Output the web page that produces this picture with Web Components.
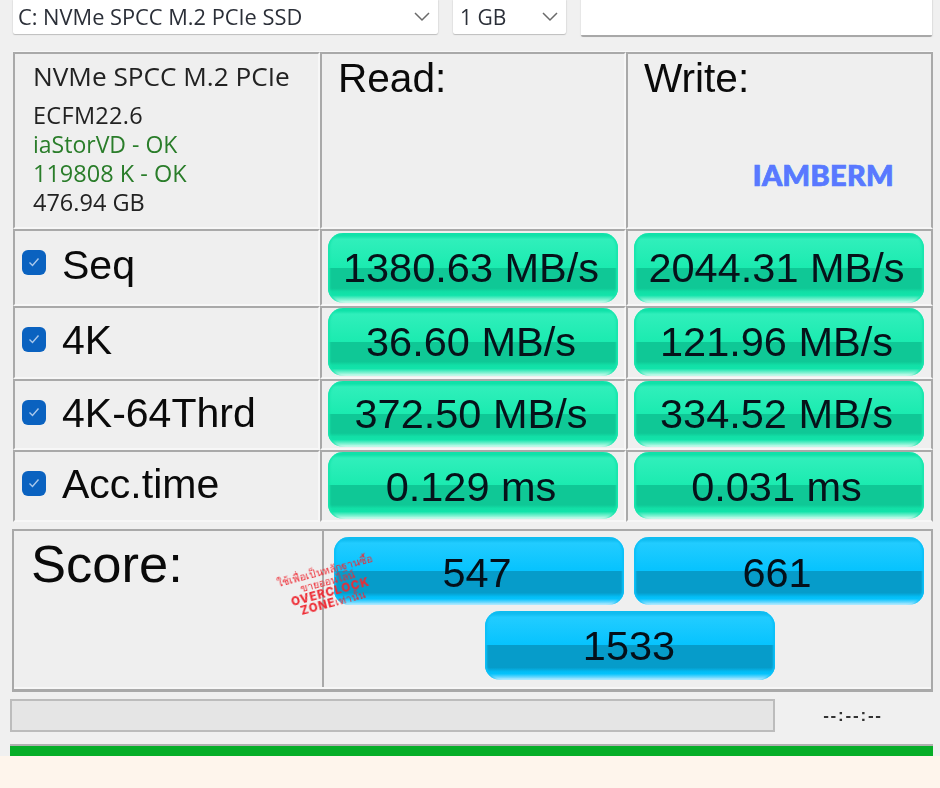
<!DOCTYPE html>
<html lang="en">
<head>
<meta charset="utf-8">
<title>AS SSD Benchmark</title>
<style>
  html, body { margin: 0; padding: 0; background: #f0f0f0; }
</style>
</head>
<body>
<bench-app>
  <bench-toolbar slot="toolbar">
    <bench-select style="width:425px">C: NVMe SPCC M.2 PCIe SSD</bench-select>
    <bench-select style="width:113px;padding-left:7px;font-size:21px">1 GB</bench-select>
    <bench-input></bench-input>
  </bench-toolbar>

  <bench-table slot="table">
    <bench-cell>
      <bench-info>
        <span>NVMe SPCC M.2 PCIe</span>
        <span slot="lines" style="letter-spacing:.3px">ECFM22.6</span>
        <span slot="lines" class="ok" style="font-size:23px">iaStorVD - OK</span>
        <span slot="lines" class="ok">119808 K - OK</span>
        <span slot="lines">476.94 GB</span>
      </bench-info>
    </bench-cell>
    <bench-cell><bench-heading>Read:</bench-heading></bench-cell>
    <bench-cell last>
      <bench-heading>Write:<bench-mark slot="mark">IAMBERM</bench-mark></bench-heading>
    </bench-cell>

    <bench-cell><bench-check style="--top:14px">Seq</bench-check></bench-cell>
    <bench-cell pill style="padding-top:2px"><bench-result>1380.63 MB/s</bench-result></bench-cell>
    <bench-cell pill last style="padding-top:2px"><bench-result style="padding-right:5px">2044.31 MB/s</bench-result></bench-cell>

    <bench-cell><bench-check>4K</bench-check></bench-cell>
    <bench-cell pill><bench-result>36.60 MB/s</bench-result></bench-cell>
    <bench-cell pill last><bench-result style="padding-right:5px">121.96 MB/s</bench-result></bench-cell>

    <bench-cell><bench-check>4K-64Thrd</bench-check></bench-cell>
    <bench-cell pill><bench-result>372.50 MB/s</bench-result></bench-cell>
    <bench-cell pill last><bench-result style="padding-right:5px">334.52 MB/s</bench-result></bench-cell>

    <bench-cell><bench-check>Acc.time</bench-check></bench-cell>
    <bench-cell pill><bench-result style="padding-top:3px">0.129 ms</bench-result></bench-cell>
    <bench-cell pill last><bench-result style="padding:3px 5px 0 0">0.031 ms</bench-result></bench-cell>
  </bench-table>

  <bench-score slot="score">
    <bench-result blue style="padding-top:3px">547</bench-result>
    <bench-result blue style="padding-top:3px">661</bench-result>
    <bench-result blue total>1533</bench-result>
  </bench-score>

  <bench-progress slot="progress">--:--:--</bench-progress>
  <bench-status slot="status"></bench-status>
</bench-app>

<script>
const UI_FONT = '"Open Sans", "Noto Sans", sans-serif';
const BIG_FONT = '"Liberation Sans", Arial, sans-serif';

class BenchApp extends HTMLElement {
  constructor() {
    super();
    this.attachShadow({ mode: "open" }).innerHTML = `
      <style>
        :host { display: block; width: 940px; height: 788px; overflow: hidden; background: #fef5ec; }
        .window { height: 756px; background: #f0f0f0; overflow: hidden; display: flex; flex-direction: column; }
      </style>
      <div class="window">
        <slot name="toolbar"></slot>
        <slot name="table"></slot>
        <slot name="score"></slot>
        <slot name="progress"></slot>
        <slot name="status"></slot>
      </div>
    `;
  }
}

class BenchToolbar extends HTMLElement {
  constructor() {
    super();
    this.attachShadow({ mode: "open" }).innerHTML = `
      <style>
        :host { display: flex; gap: 15px; align-items: flex-start; height: 52px; padding-left: 13px; box-sizing: border-box; }
      </style>
      <slot></slot>
    `;
  }
}

class BenchSelect extends HTMLElement {
  constructor() {
    super();
    this.attachShadow({ mode: "open" }).innerHTML = `
      <style>
        :host {
          display: flex; align-items: center; justify-content: space-between;
          height: 34px; box-sizing: border-box; padding: 0 8px 1px 5px;
          background: #fff; border-radius: 0 0 2px 2px;
          box-shadow: 0 1px 1px #bdbdbd, 1px 0 1px #e2e2e2, -1px 0 1px #e6e6e6;
          font: 21.8px ${UI_FONT}; color: #2b2f38; white-space: nowrap;
          filter: blur(.4px);
        }
        svg { flex: none; }
      </style>
      <span><slot></slot></span>
      <svg width="16" height="10" viewBox="0 0 16 10"><path d="M1 1l7 7 7-7" fill="none" stroke="#6a6a6a" stroke-width="1.5"/></svg>
    `;
  }
}

class BenchInput extends HTMLElement {
  constructor() {
    super();
    this.attachShadow({ mode: "open" }).innerHTML = `
      <style>
        :host {
          display: block; width: 351px; height: 37px; background: #fff;
          border-bottom: 2px solid #a8a8a8; box-sizing: border-box; border-radius: 0 0 2px 2px;
          box-shadow: 1px 0 1px #ddd, -1px 0 1px #e6e6e6;
        }
      </style>
    `;
  }
}

class BenchTable extends HTMLElement {
  constructor() {
    super();
    this.attachShadow({ mode: "open" }).innerHTML = `
      <style>
        :host {
          display: grid; grid-template-columns: 307px 306px 307px;
          grid-template-rows: 177px 77px 73px 71px 72px;
          width: 920px; margin-left: 13px; box-shadow: 0 -1px #f7f7f7;
        }
      </style>
      <slot></slot>
    `;
  }
}

class BenchCell extends HTMLElement {
  constructor() {
    super();
    this.attachShadow({ mode: "open" }).innerHTML = `
      <style>
        :host {
          display: flex; box-sizing: border-box; min-width: 0;
          border: 2px solid #a9a9a9; border-right-color: #f7f7f7; border-bottom-color: #f7f7f7;
          background: #efefef;
        }
        :host([last]) { border-right-color: #a9a9a9; }
        :host([pill]) { padding: 0 6px 1px; }
        :host([pill][last]) { padding-right: 7px; }
      </style>
      <slot></slot>
    `;
  }
}

class BenchInfo extends HTMLElement {
  constructor() {
    super();
    this.attachShadow({ mode: "open" }).innerHTML = `
      <style>
        :host { display: block; padding: 6px 0 0 18px; font: 23.5px/29px ${UI_FONT}; color: #222; white-space: nowrap; filter: blur(.4px); }
        .name { height: 41px; line-height: 33px; font-size: 26.2px; }
        .lines { display: flex; flex-direction: column; }
        ::slotted(.ok) { color: #2a7d2a; }
      </style>
      <div class="name"><slot></slot></div>
      <div class="lines"><slot name="lines"></slot></div>
    `;
  }
}

class BenchHeading extends HTMLElement {
  constructor() {
    super();
    this.attachShadow({ mode: "open" }).innerHTML = `
      <style>
        :host { display: flex; flex-direction: column; flex: 1; padding: 0 0 0 16px; font: 40.6px/48px ${BIG_FONT}; color: #0a0a0a; filter: blur(.3px); }
        .mark { display: flex; justify-content: flex-end; padding: 58px 37px 0 0; }
      </style>
      <div><slot></slot></div>
      <div class="mark"><slot name="mark"></slot></div>
    `;
  }
}

class BenchMark extends HTMLElement {
  constructor() {
    super();
    this.attachShadow({ mode: "open" }).innerHTML = `
      <style>
        :host {
          display: block; font: 900 29px/30px Lato, sans-serif; letter-spacing: .3px;
          color: #5a78ff; -webkit-text-stroke: .7px #5a78ff; text-shadow: 1px 0 0 #8fe6f2;
        }
      </style>
      <slot></slot>
    `;
  }
}

class BenchCheck extends HTMLElement {
  constructor() {
    super();
    this.attachShadow({ mode: "open" }).innerHTML = `
      <style>
        :host {
          display: flex; align-items: flex-start; gap: 16px; flex: 1; padding-left: 7px;
          font: 41px/41px ${BIG_FONT}; color: #0a0a0a; white-space: nowrap;
        }
        .box {
          width: 24px; height: 25px; margin-top: 19px; flex: none; border-radius: 6px; background: #0a62c0;
          display: flex; align-items: center; justify-content: center;
        }
        .text { margin-top: var(--top, 12px); filter: blur(.3px); }
      </style>
      <span class="box">
        <svg width="12" height="10" viewBox="0 0 12 10"><path d="M1.5 5.5l3 3L10.5 1.5" fill="none" stroke="#a9c8ec" stroke-width="1.4"/></svg>
      </span>
      <span class="text"><slot></slot></span>
    `;
  }
}

class BenchResult extends HTMLElement {
  constructor() {
    super();
    this.attachShadow({ mode: "open" }).innerHTML = `
      <style>
        :host {
          display: flex; align-items: center; justify-content: center; flex: 1;
          box-sizing: border-box; border-radius: 15px; white-space: nowrap; padding-right: 4px;
          font: 41.5px/1 ${BIG_FONT}; color: #06121a;
          background: linear-gradient(#10e2a9 0, #10e2a9 4%, #30efbb 9%, #1bebb0 49.5%, #0fc896 50%, #0fc896 79%, #12dfa6 84%, #12e3aa 89%, #8af4d6 96%, #e2fcf4 100%);
          box-shadow: inset 3px 0 2px -1px #18e6ad, inset -3px 0 2px -1px #18e6ad;
        }
        :host([blue]) {
          flex: 0 0 290px; height: 68px; color: #04101a;
          background: linear-gradient(#10bcf0 0, #10bcf0 4%, #22ccff 9%, #06c3fe 49.5%, #069cca 50%, #069cca 82%, #03bdf5 88%, #05c3fc 91%, #7cdcff 97%, #d0f2ff 100%);
          box-shadow: inset 3px 0 2px -1px #0cc0f8, inset -3px 0 2px -1px #0cc0f8;
        }
        :host([total]) { margin-left: 151px; height: 69px; padding-right: 2px; }
        span { filter: blur(.3px); }
      </style>
      <span><slot></slot></span>
    `;
  }
}

class BenchScore extends HTMLElement {
  constructor() {
    super();
    this.attachShadow({ mode: "open" }).innerHTML = `
      <style>
        :host {
          display: grid; grid-template-columns: 310px 1fr; position: relative;
          box-sizing: border-box; width: 921px; height: 164px; margin: 7px 0 0 12px;
          border: 2px solid #a9a9a9; border-bottom-width: 3px;
          background: #efefef; box-shadow: inset 0 -2px #f7f7f7;
        }
        .label {
          font: 52.5px/1 ${BIG_FONT}; color: #0a0a0a; padding: 7px 0 0 17px;
          border-right: 2px solid #a9a9a9; filter: blur(.3px);
          margin-bottom: 2px;
        }
        .values {
          display: flex; flex-wrap: wrap; gap: 6px 10px; align-content: flex-start;
          padding: 6px 0 0 10px; box-sizing: border-box; width: 600px;
        }
        .stamp {
          position: absolute; left: 255px; top: 34px; width: 120px;
          transform: rotate(-15deg); text-align: center; color: #ee2a33;
          font: 10.5px/11px "Noto Sans", "Liberation Sans", sans-serif; white-space: nowrap;
          filter: blur(.3px);
        }
        .stamp b { font: 800 11.5px/11px Inter, sans-serif; letter-spacing: .9px; }
      </style>
      <div class="label">Score:</div>
      <div class="values"><slot></slot></div>
      <div class="stamp">ใช้เพื่อเป็นหลักฐานซื้อ<br>ขายออนไลน์<br><b>OVERCLOCK</b><br><b>ZONE</b>เท่านั้น</div>
    `;
  }
}

class BenchProgress extends HTMLElement {
  constructor() {
    super();
    this.attachShadow({ mode: "open" }).innerHTML = `
      <style>
        :host { display: flex; align-items: center; padding: 7px 0 0 10px; }
        .bar { width: 765px; height: 33px; box-sizing: border-box; background: #e5e5e5; border: 2px solid #bcbcbc; }
        .time { flex: 1; text-align: center; padding-right: 9px; font: 700 17px/33px "Liberation Sans", sans-serif; letter-spacing: 1.8px; color: #333; filter: blur(.3px); }
      </style>
      <div class="bar"></div>
      <div class="time"><slot></slot></div>
    `;
  }
}

class BenchStatus extends HTMLElement {
  constructor() {
    super();
    this.attachShadow({ mode: "open" }).innerHTML = `
      <style>
        :host {
          display: block; width: 923px; height: 12px; margin: 12px 0 0 10px; box-sizing: border-box;
          background: #06ae28; border-top: 2px solid #b0b0b0;
        }
      </style>
    `;
  }
}

customElements.define("bench-app", BenchApp);
customElements.define("bench-toolbar", BenchToolbar);
customElements.define("bench-select", BenchSelect);
customElements.define("bench-input", BenchInput);
customElements.define("bench-table", BenchTable);
customElements.define("bench-cell", BenchCell);
customElements.define("bench-info", BenchInfo);
customElements.define("bench-heading", BenchHeading);
customElements.define("bench-mark", BenchMark);
customElements.define("bench-check", BenchCheck);
customElements.define("bench-result", BenchResult);
customElements.define("bench-score", BenchScore);
customElements.define("bench-progress", BenchProgress);
customElements.define("bench-status", BenchStatus);
</script>
</body>
</html>
